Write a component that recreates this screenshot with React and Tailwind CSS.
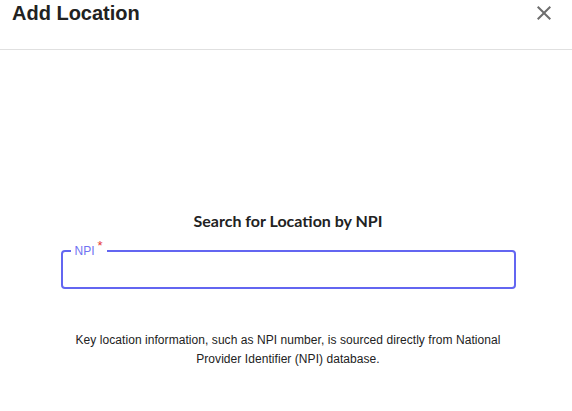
export default function App() {
  return (
    <div className="w-[572px] h-[411px] bg-white overflow-hidden" style={{ fontFamily: '"Liberation Sans", Arial, sans-serif' }}>
      <div className="h-[50px] border-b border-[#e0e0e0] flex items-start justify-between pl-3 pr-4">
        <div className="text-[20px] leading-[22px] font-bold text-[#222] mt-[2px]">Add Location</div>
        <svg width="24" height="24" viewBox="0 0 24 24" className="mt-[1px]" fill="#6e6e6e">
          <path d="M19 6.41 17.59 5 12 10.59 6.41 5 5 6.41 10.59 12 5 17.59 6.41 19 12 13.41 17.59 19 19 17.59 13.41 12z" />
        </svg>
      </div>
      <div className="flex flex-col items-center pt-[161px] pl-[4px]">
        <div className="text-[16px] leading-[20px] font-bold text-[#222]" style={{ fontFamily: 'Lato, sans-serif' }}>Search for Location by NPI</div>
        <div className="relative mt-[19px] w-[455px] h-[39px] rounded-[4px] border-2 border-[#6366f1]">
          <div className="absolute left-[8px] top-[-8px] bg-white px-[4px] text-[12px] leading-[14px] text-[#6f73f2] flex items-start">
            NPI<span className="text-[#e53935] ml-[3px] mt-[-5px] text-[13px]">*</span>
          </div>
        </div>
        <p className="mt-[42px] text-[12px] leading-[19px] tracking-[0.06px] text-[#222] text-center w-[446px]">
          Key location information, such as NPI number, is sourced directly from National Provider Identifier (NPI) database.
        </p>
      </div>
    </div>
  );
}
